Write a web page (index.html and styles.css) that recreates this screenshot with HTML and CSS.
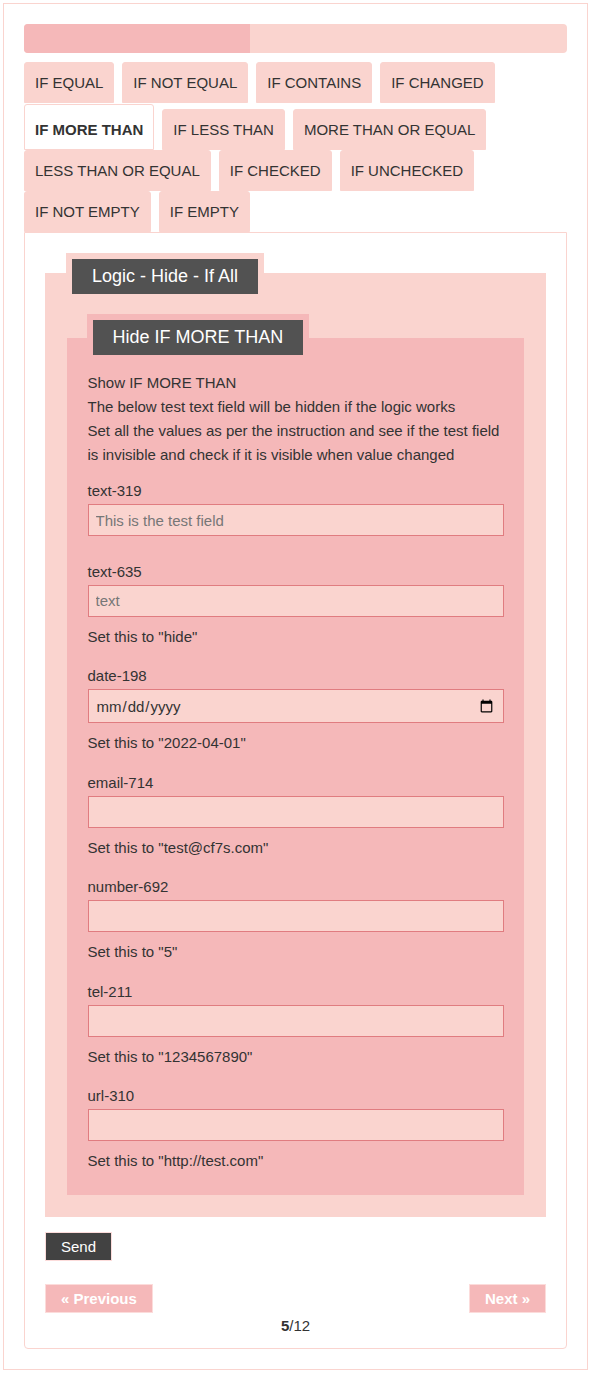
FILE: index.html
```html
<!DOCTYPE html>
<html lang="en">
<head>
<meta charset="utf-8">
<title>Logic - Hide - If All</title>
<link rel="stylesheet" href="styles.css">
</head>
<body>
<div class="wrap">
  <div class="progress"><div class="progress-fill" style="width:41.67%"></div></div>
  <ul class="tabs">
    <li class="tab">IF EQUAL</li>
    <li class="tab">IF NOT EQUAL</li>
    <li class="tab">IF CONTAINS</li>
    <li class="tab">IF CHANGED</li>
    <li class="tab active">IF MORE THAN</li>
    <li class="tab">IF LESS THAN</li>
    <li class="tab">MORE THAN OR EQUAL</li>
    <li class="tab">LESS THAN OR EQUAL</li>
    <li class="tab">IF CHECKED</li>
    <li class="tab">IF UNCHECKED</li>
    <li class="tab">IF NOT EMPTY</li>
    <li class="tab">IF EMPTY</li>
  </ul>
  <div class="panel">
    <div class="fs fs-outer">
      <div class="legend"><span class="legend-text">Logic - Hide - If All</span></div>
      <div class="fs fs-inner">
        <div class="legend"><span class="legend-text">Hide IF MORE THAN</span></div>
        <div class="intro">Show IF MORE THAN<br>The below test text field will be hidden if the logic works<br>Set all the values as per the instruction and see if the test field is invisible and check if it is visible when value changed</div>
        <div class="group">
          <div class="lbl">text-319</div>
          <input class="inp" type="text" placeholder="This is the test field">
        </div>
        <div class="group">
          <div class="lbl">text-635</div>
          <input class="inp" type="text" placeholder="text">
          <div class="desc">Set this to "hide"</div>
        </div>
        <div class="group">
          <div class="lbl">date-198</div>
          <input class="inp inp-date" type="date">
          <div class="desc">Set this to "2022-04-01"</div>
        </div>
        <div class="group">
          <div class="lbl">email-714</div>
          <input class="inp" type="email">
          <div class="desc">Set this to "test@cf7s.com"</div>
        </div>
        <div class="group">
          <div class="lbl">number-692</div>
          <input class="inp" type="text">
          <div class="desc">Set this to "5"</div>
        </div>
        <div class="group">
          <div class="lbl">tel-211</div>
          <input class="inp" type="tel">
          <div class="desc">Set this to "1234567890"</div>
        </div>
        <div class="group">
          <div class="lbl">url-310</div>
          <input class="inp" type="url">
          <div class="desc">Set this to "http://test.com"</div>
        </div>
      </div>
    </div>
    <button class="send" type="button">Send</button>
    <div class="pager">
      <button class="pbtn" type="button">« Previous</button>
      <button class="pbtn" type="button">Next »</button>
    </div>
    <div class="count"><b>5</b>/12</div>
  </div>
</div>
</body>
</html>
```
FILE: styles.css
```css
* {
  box-sizing: border-box;
}

body {
  margin: 3px;
  font-family: "Liberation Sans", Arial, sans-serif;
  font-size: 15px;
  color: #333;
  background: #fff;
}

.wrap {
  width: 585px;
  border: 1px solid #fad4cf;
  padding: 20px;
}

.progress {
  height: 29px;
  background: #fad4cf;
  border-radius: 4px;
  overflow: hidden;
  margin-bottom: 9px;
}

.progress-fill {
  height: 100%;
  background: #f5b8b9;
}

.tabs {
  list-style: none;
  margin: 0;
  padding: 0;
  display: flex;
  flex-wrap: wrap;
  align-items: flex-end;
  column-gap: 8px;
}

.tab {
  height: 41px;
  line-height: 39px;
  padding: 0 10px;
  border: 1px solid #fad4cf;
  background: #fad4cf;
  border-radius: 3px 3px 0 0;
  white-space: nowrap;
}

.tab.active {
  height: 46px;
  padding-top: 5px;
  margin-top: 1px;
  background: #fff;
  font-weight: bold;
}

.panel {
  border: 1px solid #fad4cf;
  border-radius: 0 0 4px 4px;
  padding: 40px 20px 10px;
}

.fs {
  display: flow-root;
}

.fs-outer {
  background: #fad4cf;
  padding: 0 22px 22px;
}

.legend {
  width: fit-content;
  padding: 6px;
}

.fs-outer > .legend {
  margin: -20px 0 0 -1px;
  background: #fad4cf;
}

.legend-text {
  display: block;
  background: #525252;
  color: #fff;
  font-size: 18px;
  line-height: 35px;
  padding: 0 20px;
  white-space: nowrap;
}

.fs-inner {
  background: #f5b8b9;
  margin-top: 38px;
  padding: 0 20.5px 22px;
}

.fs-inner > .legend {
  margin: -24px 0 0 -1px;
  background: #f5b8b9;
}

.intro {
  margin: 10px 0 12px;
  line-height: 24px;
}

.group {
  padding-bottom: 15.5px;
}

.group:last-child {
  padding-bottom: 0;
}

.lbl {
  line-height: 24px;
}

.inp {
  display: block;
  width: 100%;
  height: 32px;
  margin: 1px 0 8px;
  border: 1px solid #e07c80;
  border-radius: 0;
  background: #fad4cf;
  padding: 0 7px;
  font-family: "Liberation Sans", Arial, sans-serif;
  font-size: 15px;
  color: #333;
  outline: none;
}

.inp::placeholder {
  color: #777;
}

.inp-date {
  height: 34px;
}

.desc {
  line-height: 24px;
}

.send {
  display: block;
  margin-top: 14.5px;
  height: 29px;
  padding: 0 15px;
  background: #424242;
  color: #fff;
  border: 1px solid #fcdcdb;
  border-radius: 0;
  font-family: "Liberation Sans", Arial, sans-serif;
  font-size: 15px;
}

.pager {
  display: flex;
  justify-content: space-between;
  margin-top: 23px;
}

.pbtn {
  height: 29px;
  padding: 0 15px;
  background: #f5b8b9;
  color: #fff;
  border: 1px solid #fcdcdb;
  border-radius: 0;
  font-family: "Liberation Sans", Arial, sans-serif;
  font-size: 15px;
  font-weight: bold;
}

.count {
  text-align: center;
  line-height: 24px;
  margin-top: 1px;
}
```
